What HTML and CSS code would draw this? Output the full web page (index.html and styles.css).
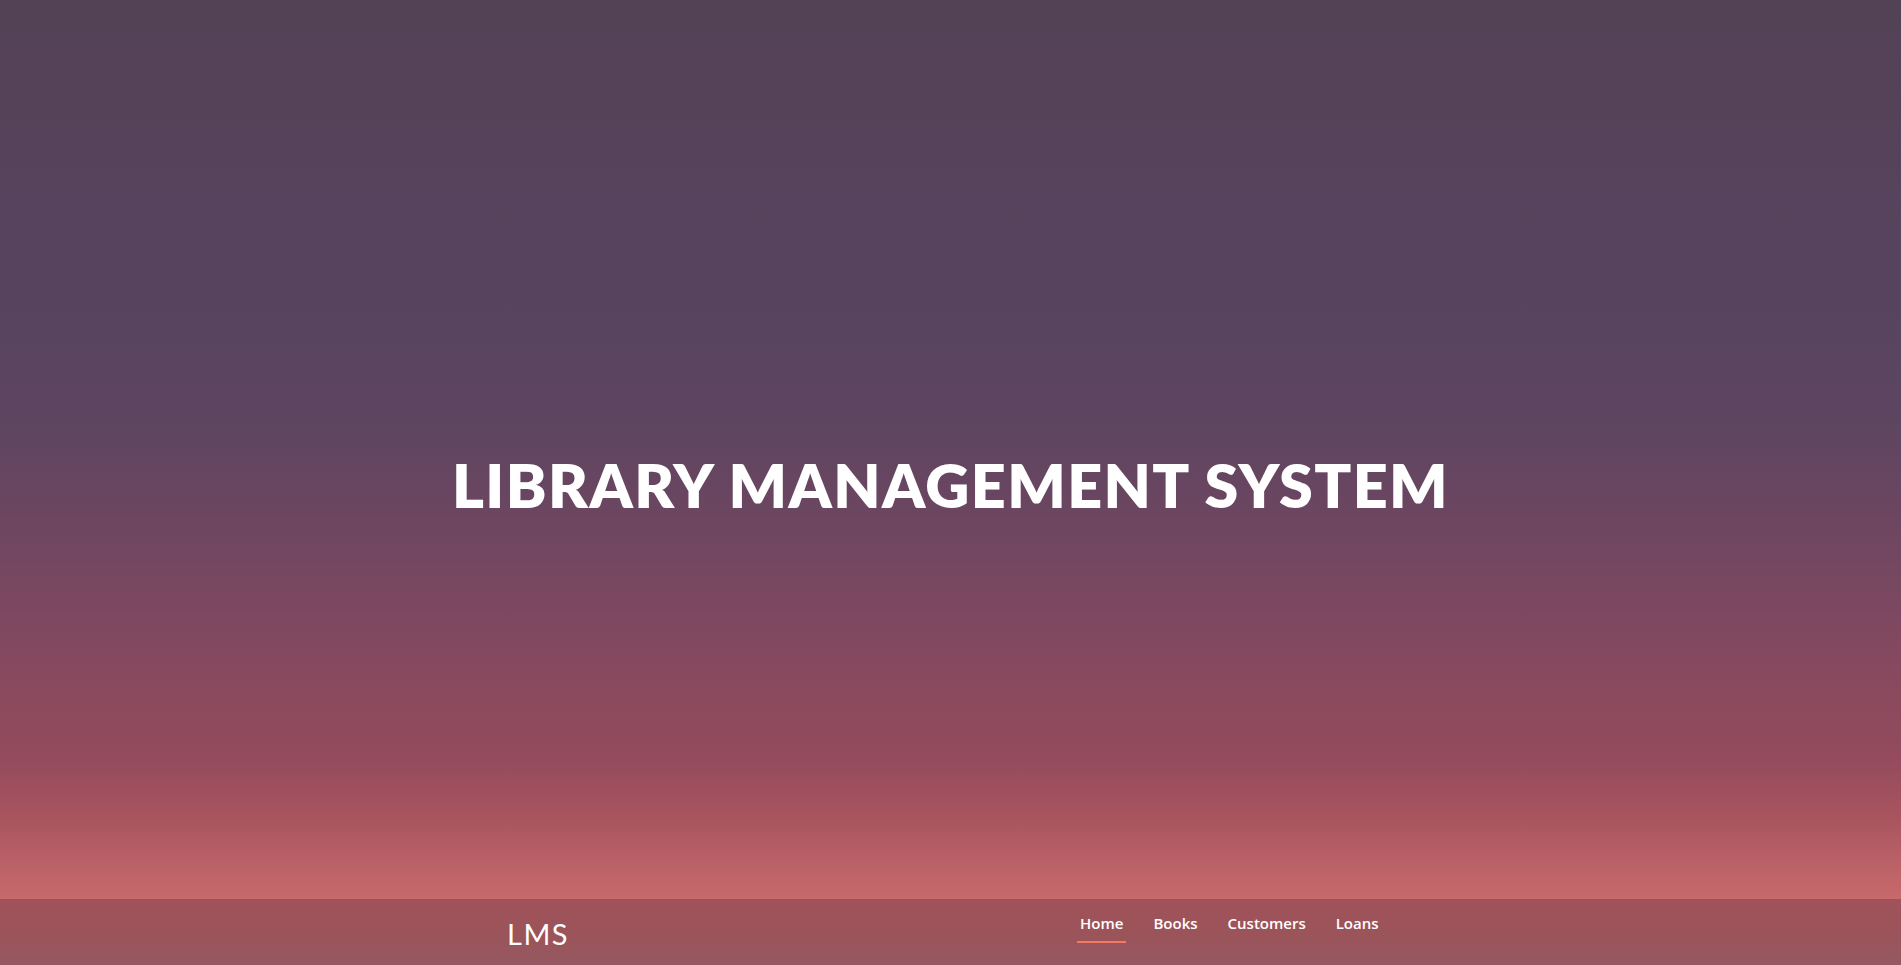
FILE: index.html
```html
<!DOCTYPE html>
<html lang="en">
<head>
<meta charset="utf-8">
<title>Library Management System</title>
<link rel="stylesheet" href="styles.css">
</head>
<body>
<div class="page">
  <header class="hero">
    <h1 class="hero-title">LIBRARY MANAGEMENT SYSTEM</h1>
  </header>
  <nav class="navbar">
    <div class="navbar-inner">
      <a class="brand" href="#">LMS</a>
      <ul class="nav-links">
        <li><a class="nav-link active" href="#">Home</a></li>
        <li><a class="nav-link" href="#">Books</a></li>
        <li><a class="nav-link" href="#">Customers</a></li>
        <li><a class="nav-link" href="#">Loans</a></li>
      </ul>
    </div>
  </nav>
</div>
</body>
</html>
```
FILE: styles.css
```css
html, body {
  margin: 0;
  padding: 0;
  height: 100%;
  overflow: hidden;
}
.page {
  height: 965px;
  display: flex;
  flex-direction: column;
  background: #544157;
}
.hero {
  height: 899px;
  flex: none;
  box-sizing: border-box;
  padding-top: 70px;
  display: flex;
  align-items: center;
  justify-content: center;
  background: linear-gradient(to bottom,
    #534156 0px,
    #594460 330px,
    #5d4560 420px,
    #6d4660 520px,
    #7e4860 620px,
    #8f4a5d 720px,
    #944b5d 760px,
    #a9555f 820px,
    #bd6368 870px,
    #c8696b 899px);
}
.hero-title {
  margin: 0;
  color: #ffffff;
  font-family: "Lato", "Liberation Sans", sans-serif;
  font-weight: 800;
  font-size: 61px;
  letter-spacing: 1.4px;
  line-height: 1;
}
.navbar {
  flex: 1;
  background: linear-gradient(to bottom, #a0525a 0%, #9b5459 50%, #955861 100%);
}
.navbar-inner {
  display: flex;
  align-items: flex-start;
  padding-left: 507px;
}
.brand {
  margin-top: 15px;
  color: #ffffff;
  text-decoration: none;
  font-family: "Lato", "Inter", sans-serif;
  font-weight: 400;
  font-size: 29px;
  letter-spacing: 1.5px;
  line-height: 40px;
}
.nav-links {
  list-style: none;
  margin: 0 0 0 508px;
  padding: 0;
  display: flex;
  gap: 24px;
}
.nav-link {
  display: block;
  padding: 14px 3px 0;
  height: 28px;
  color: #ffffff;
  text-decoration: none;
  font-family: "Open Sans", "Noto Sans", sans-serif;
  font-weight: 600;
  font-size: 15px;
  line-height: 20px;
  border-bottom: 2px solid transparent;
  box-sizing: content-box;
}
.nav-link.active {
  border-bottom-color: #f27b5e;
}
```
